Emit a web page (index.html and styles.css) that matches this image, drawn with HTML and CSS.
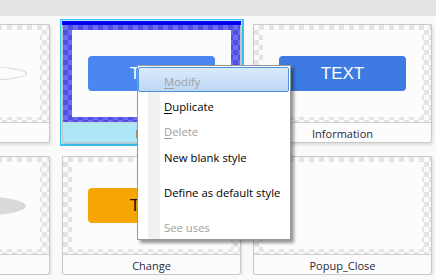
FILE: index.html
```html
<!DOCTYPE html>
<html lang="en">
<head>
    <meta charset="UTF-8">
    <title>Styles</title>
    <link rel="stylesheet" href="styles.css">
</head>
<body>
    <div class="toolbar"></div>

    <div class="gallery">
        <div class="card">
            <div class="thumb"><div class="canvas"><span class="ellipse outline"></span></div></div>
            <div class="label"></div>
        </div>
        <div class="card selected">
            <div class="thumb"><div class="canvas"><span class="btn blue light">TEXT</span></div></div>
            <div class="label">Dialog</div>
        </div>
        <div class="card">
            <div class="thumb"><div class="canvas"><span class="btn blue">TEXT</span></div></div>
            <div class="label">Information</div>
        </div>
        <div class="card">
            <div class="thumb"><div class="canvas"><span class="ellipse filled"></span></div></div>
            <div class="label"></div>
        </div>
        <div class="card">
            <div class="thumb"><div class="canvas"><span class="btn orange">TEXT</span></div></div>
            <div class="label">Change</div>
        </div>
        <div class="card">
            <div class="thumb"><div class="canvas"></div></div>
            <div class="label">Popup_Close</div>
        </div>
    </div>

    <!-- context menu over the selected style -->
    <ul class="menu">
        <li class="item disabled hover"><u>M</u>odify</li>
        <li class="item"><u>D</u>uplicate</li>
        <li class="item disabled"><u>D</u>elete</li>
        <li class="sep small"></li>
        <li class="item">New blank style</li>
        <li class="sep"></li>
        <li class="item">Define as default style</li>
        <li class="sep"></li>
        <li class="item disabled">See uses</li>
    </ul>
</body>
</html>
```

FILE: styles.css
```css
body {
    margin: 0;
    background: #fafafa;
    font-family: "Open Sans", "Noto Sans", sans-serif;
    font-size: 11px;
    overflow: hidden;
}
.toolbar {
    height: 16px;
    background: #e3e4e1;
}
.gallery {
    display: grid;
    grid-template-columns: repeat(3, 179px);
    column-gap: 12px;
    row-gap: 13px;
    margin-left: -129px;
    padding-top: 8px;
}
.card {
    position: relative;
    border: 1px solid #c9c9c9;
    border-radius: 0 0 3px 3px;
    background: #fcfcfc;
    box-shadow: 1px 2px 3px rgba(0, 0, 0, 0.12);
}
.thumb {
    height: 98px;
    padding: 5px 9px 5px 9px;
    box-sizing: border-box;
    background: repeating-conic-gradient(#e4e4e4 0 25%, #fbfbfb 0 50%) 0 0 / 10px 10px;
    border-bottom: 1px solid #cfcfcf;
}
.canvas {
    height: 100%;
    background: #fcfcfc;
    display: flex;
    align-items: center;
    justify-content: center;
}
.label {
    height: 19px;
    line-height: 22px;
    text-align: center;
    color: #2b2838;
}
.btn {
    width: 127px;
    height: 35px;
    border-radius: 4px;
    display: flex;
    align-items: center;
    justify-content: center;
    font-family: "Liberation Sans", Arial, sans-serif;
    font-size: 17px;
    flex: none;
}
.btn.blue {
    background: #3d7be2;
    color: #fff;
}
.btn.blue.light {
    background: #4a87ee;
}
.btn.orange {
    background: #f5a504;
    color: #111;
}
.ellipse {
    flex: none;
    width: 130px;
    border-radius: 50%;
}
.ellipse.outline {
    height: 15px;
    border: 1px solid #d2d2d2;
}
.ellipse.filled {
    height: 22px;
    background: #d9dad8;
}

/* selected style */
.card.selected {
    background: transparent;
    border-color: #c4c4c4;
}
.card.selected::before {
    content: "";
    position: absolute;
    top: -6px;
    left: -3px;
    right: -4px;
    bottom: -4px;
    border: 1px solid #3cc6f6;
    border-right-width: 2px;
    border-bottom-width: 2px;
    background: #aee6fa;
    z-index: -1;
}
.card.selected::after {
    content: "";
    position: absolute;
    top: -4px;
    left: -1px;
    right: -1px;
    height: 4px;
    background: #0000f5;
}
.card.selected .thumb {
    background: repeating-conic-gradient(#4f4fe4 0 25%, #6d6df3 0 50%) 0 0 / 10px 10px;
}

/* context menu */
.menu {
    position: absolute;
    left: 137px;
    top: 65px;
    width: 151px;
    margin: 0;
    padding: 1px 1px 1px 0;
    list-style: none;
    border: 1px solid #979797;
    background: linear-gradient(to right, #fff 10px, #f1f1f1 10px, #f1f1f1 22px, #fff 22px);
    box-shadow: 3px 3px 3px rgba(0, 0, 0, 0.4);
    font-size: 11.3px;
}
.item {
    height: 25px;
    line-height: 29px;
    padding-left: 26px;
    box-sizing: border-box;
    color: #000;
    white-space: nowrap;
}
.item.disabled {
    color: #a0a0a0;
}
.item.hover {
    border: 1px solid #4a97de;
    border-radius: 2px;
    padding-left: 25px;
    line-height: 27px;
    background: linear-gradient(#dbeafb, #bcd7f5);
}
.sep {
    height: 10px;
}
.sep.small {
    height: 1px;
}
u {
    text-decoration-thickness: 1px;
    text-underline-offset: 2px;
}
```
